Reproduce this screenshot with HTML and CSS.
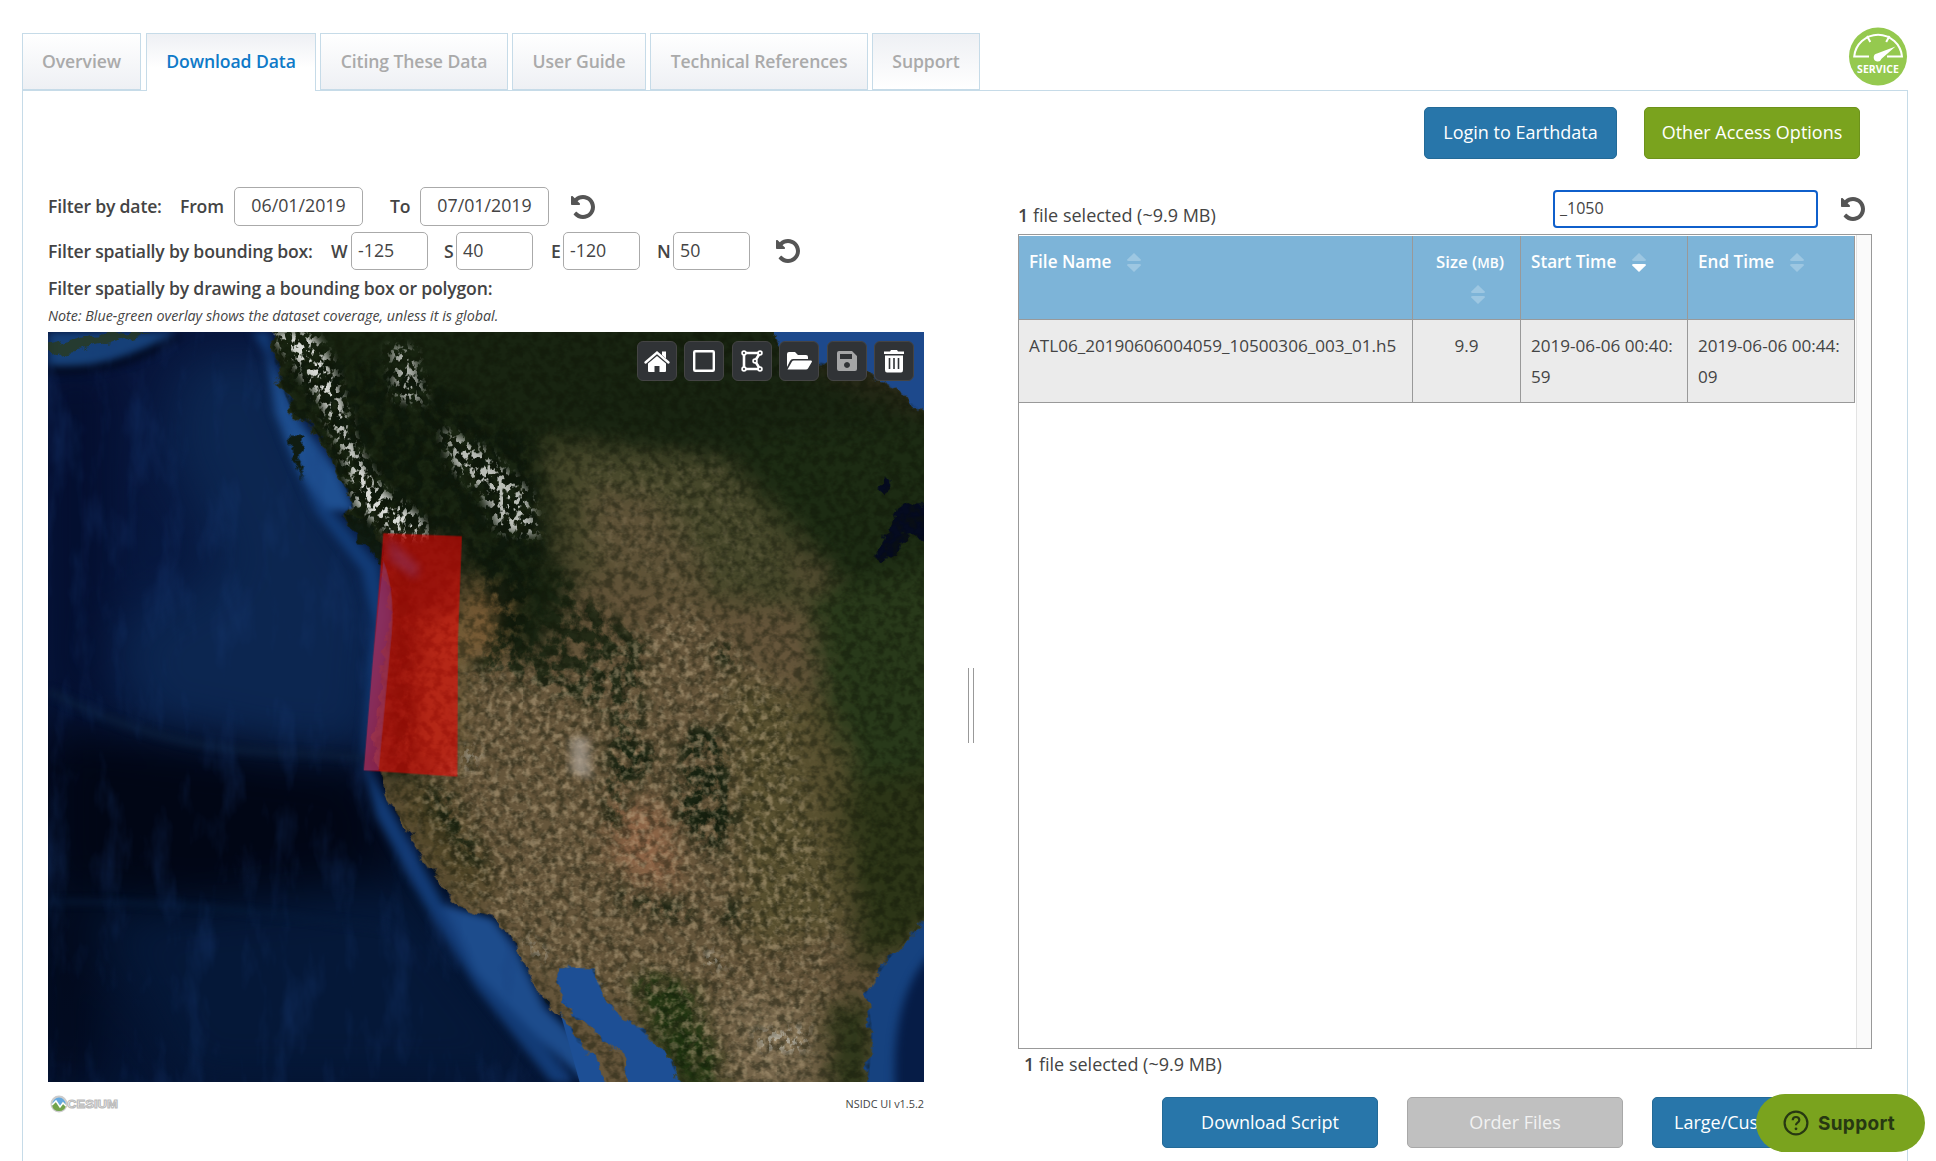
FILE: index.html
```html
<!DOCTYPE html>
<html lang="en">
<head>
<meta charset="utf-8">
<title>Download Data</title>
<link rel="stylesheet" href="styles.css">
</head>
<body>
<svg class="defs" width="0" height="0" aria-hidden="true">
  <symbol id="undo" viewBox="0 0 24 28"><path d="M24 14c0 6.6-5.4 12-12 12-3.600 0-7-1.600-9.250-4.350-.16-.2-.14-.5.03-.69l2.140-2.160c.1-.1.250-.140.39-.140.140.02.28.08.36.190A7.980 7.980 0 0 0 12 22c4.400 0 8-3.600 8-8s-3.600-8-8-8c-2.050 0-4 .8-5.440 2.170l2.140 2.160c.3.280.390.720.230 1.080-.16.370-.52.620-.92.620H1c-.55 0-1-.45-1-1V4c0-.4.250-.77.620-.92.370-.16.800-.08 1.100.22l2.030 2.010A12.060 12.060 0 0 1 12 2c6.600 0 12 5.400 12 12z"/></symbol>
  <symbol id="sort" viewBox="0 0 14 24" preserveAspectRatio="none"><path class="up" d="M7 0L14 8.500Q14 10 12.500 10H1.500Q0 10 0 8.500Z"/><path class="down" d="M7 24L14 15.500Q14 14 12.500 14H1.500Q0 14 0 15.500Z"/></symbol>
</svg>
<div class="page">
  <header class="top">
    <nav class="tabs">
      <a class="tab overview">Overview</a>
      <a class="tab active">Download Data</a>
      <a class="tab citing">Citing These Data</a>
      <a class="tab guide">User Guide</a>
      <a class="tab technical">Technical References</a>
      <a class="tab plain">Support</a>
    </nav>
    <svg class="service" viewBox="0 0 58 58">
      <circle cx="29" cy="29" r="29" fill="#95c94f"/>
      <g fill="none" stroke="#fff" stroke-width="2"><path d="M20 29H5.200A24 24 0 0 1 53 29H38M18 8.500l3.300 6M40.500 8.500l-3.300 6"/></g>
      <path d="M46.500 19L32.500 31.200A4 4 0 1 1 28 26Z" fill="#fff"/>
      <text x="29" y="45.500" text-anchor="middle" textLength="42">SERVICE</text>
    </svg>
  </header>
  <main class="panel">
    <section class="left">
      <div class="row dates">
        <b class="label">Filter by date:</b><b class="from">From</b><span class="field date">06/01/2019</span><b class="to">To</b><span class="field date">07/01/2019</span><svg class="undo"><use href="#undo"/></svg>
      </div>
      <div class="row box">
        <b class="label">Filter spatially by bounding box:</b><b class="w">W</b><span class="field">-125</span><b class="s">S</b><span class="field">40</span><b class="e">E</b><span class="field">-120</span><b class="n">N</b><span class="field">50</span><svg class="undo"><use href="#undo"/></svg>
      </div>
      <b class="draw">Filter spatially by drawing a bounding box or polygon:</b>
      <i class="note">Note: Blue-green overlay shows the dataset coverage, unless it is global.</i>
      <div class="map">
        <svg class="globe" viewBox="14 24 1526 1528" preserveAspectRatio="none">
          <defs>
            <linearGradient id="sea" x1="0" y1="0" x2="0" y2="1"><stop offset="0" stop-color="#07143a"/><stop offset=".45" stop-color="#071a42"/><stop offset=".58" stop-color="#030c26"/><stop offset=".75" stop-color="#031028"/><stop offset="1" stop-color="#041332"/></linearGradient>
            <filter id="b8" x="-30%" y="-30%" width="160%" height="160%" color-interpolation-filters="sRGB"><feGaussianBlur stdDeviation="8"/></filter>
            <filter id="b22" x="-50%" y="-50%" width="200%" height="200%" color-interpolation-filters="sRGB"><feGaussianBlur stdDeviation="24"/></filter>
            <filter id="b45" x="-80%" y="-80%" width="260%" height="260%" color-interpolation-filters="sRGB"><feGaussianBlur stdDeviation="45"/></filter>
            <filter id="coast" x="-5%" y="-5%" width="110%" height="110%" color-interpolation-filters="sRGB"><feTurbulence type="fractalNoise" baseFrequency=".035" numOctaves="3" seed="4"/><feDisplacementMap in="SourceGraphic" scale="32" xChannelSelector="R" yChannelSelector="G"/></filter>
            <filter id="grain" x="0" y="0" width="100%" height="100%" color-interpolation-filters="sRGB"><feTurbulence type="fractalNoise" baseFrequency=".07 .055" numOctaves="4" seed="7"/><feColorMatrix values="0 0 0 0 .06  0 0 0 0 .08  0 0 0 0 .03  3.600 0 0 0 -1.500"/><feComposite in2="SourceAlpha" operator="in"/></filter>
            <filter id="light" x="-10%" y="-10%" width="120%" height="120%" color-interpolation-filters="sRGB"><feGaussianBlur in="SourceAlpha" stdDeviation="20" result="m"/><feTurbulence type="fractalNoise" baseFrequency=".09 .07" numOctaves="4" seed="19"/><feColorMatrix values="0 0 0 0 .78  0 0 0 0 .7  0 0 0 0 .56  3.500 0 0 0 -1.600"/><feComposite in2="m" operator="in"/></filter>
            <filter id="wave" x="0" y="0" width="100%" height="100%" color-interpolation-filters="sRGB"><feTurbulence type="fractalNoise" baseFrequency=".02 .006" numOctaves="4" seed="3"/><feColorMatrix values="0 0 0 0 .1  0 0 0 0 .24  0 0 0 0 .48  2.400 0 0 0 -1.200"/></filter>
            <filter id="snow" x="-20%" y="-20%" width="140%" height="140%" color-interpolation-filters="sRGB"><feGaussianBlur in="SourceAlpha" stdDeviation="10" result="m"/><feTurbulence type="fractalNoise" baseFrequency=".1 .06" numOctaves="3" seed="11"/><feColorMatrix values="0 0 0 0 .85  0 0 0 0 .86  0 0 0 0 .84  9 0 0 0 -4.600"/><feComposite in2="m" operator="in"/></filter>
            <filter id="forest" x="-20%" y="-20%" width="140%" height="140%" color-interpolation-filters="sRGB"><feGaussianBlur in="SourceGraphic" stdDeviation="14" result="m"/><feTurbulence type="fractalNoise" baseFrequency=".045 .035" numOctaves="4" seed="31"/><feColorMatrix values="0 0 0 0 0  0 0 0 0 0  0 0 0 0 0  5 0 0 0 -1.900" result="n"/><feComposite in="m" in2="n" operator="in"/></filter>
            <clipPath id="landclip"><path d="M398 -20L410 90 425 145 440 190 475 215 500 265 520 315 545 370 525 400 560 440 590 480 600 530 612 580 605 650 595 720 590 800 582 860 592 920 605 975 640 1040 665 1090 695 1140 730 1195 790 1215 825 1265 850 1330 880 1390 920 1430 935 1470 970 1500 1005 1600H1030L1015 1500 985 1470 950 1430 920 1400 905 1370 900 1320H960L985 1385 1030 1430 1090 1490 1135 1600H1440L1450 1450 1440 1370 1480 1300 1540 1225 1620 1190V240L1540 190 1490 140 1430 100 1330 80 1290 60 1260 -20Z"/></clipPath>
          </defs>
          <rect x="14" y="24" width="1526" height="1528" fill="url(#sea)"/>
          <g filter="url(#b45)">
            <path d="M250 80L410 60 530 400 610 560 585 880 420 870 170 810 130 640 320 500 220 250Z" fill="#0c2650"/>
            <path d="M14 840L580 920 620 1120 300 1180 14 1170Z" fill="#010615"/>
            <path d="M14 90V800L110 790 110 110Z" fill="#030c2b"/>
            <path d="M100 1220L640 1150 900 1552H250Z" fill="#051838"/>
            <path d="M14 1200H80V1552H14Z" fill="#010514"/>
          </g>
          <g filter="url(#b8)">
            <path d="M14 24H240Q120 100 14 100Z" fill="#164078"/>
            <path d="M370 24H400L420 190 455 290 510 390 590 500 605 600 590 720 568 900 600 970 690 1160 760 1300 890 1490 930 1552H890L760 1360 670 1190 585 1010 560 890 580 620 560 510 480 390 425 240 400 80Z" fill="#123b76"/>
            <path d="M395 60L450 200 520 310 550 390 500 385 450 310 410 190Z" fill="#1e4f90"/>
            <path d="M700 1190L790 1220 830 1280 880 1400 950 1480 1000 1552H950L850 1440 760 1330Z" fill="#1d4c8c"/>
            <path d="M14 755Q200 870 400 880T560 895" fill="none" stroke="#0c203c" stroke-width="10"/>
            <path d="M14 1185Q250 1180 600 1240" fill="none" stroke="#061a38" stroke-width="8"/>
            <path d="M14 100Q140 110 240 30" fill="none" stroke="#020a20" stroke-width="16"/>
          </g>
          <rect x="14" y="24" width="1000" height="1528" filter="url(#wave)" opacity=".35"/>
          <path d="M880 1300H1000L1200 1552H940Z" fill="#1d4f95"/>
          <path d="M1240 24H1540V230H1460Z" fill="#1d498c"/>
          <path d="M1400 1210H1540V1552H1400Z" fill="#16427f"/>
          <path d="M1560 1280Q1480 1370 1490 1572H1560Z" fill="#061c46" filter="url(#b8)"/>
          <g filter="url(#coast)"><g clip-path="url(#landclip)">
            <rect x="14" y="-20" width="1620" height="1620" fill="#66563b"/>
            <g filter="url(#b22)">
              <path d="M360 -40H1620V700L1430 560 1290 400 1180 280 870 240 900 480 930 560 850 700 760 520 560 500 400 200Z" fill="#182411"/>
              <path d="M1210 240L1620 200V560H1400L1290 400Z" fill="#1c2b13"/>
              <path d="M870 240L1190 280 1310 420 1340 590 1100 560 940 530 900 430Z" fill="#46472a"/>
              <path d="M950 340L1080 360 1180 560 970 550Z" fill="#5e5237"/>
              <path d="M1620 480L1340 560 1370 800 1430 1000 1440 1250 1620 1200Z" fill="#28391a"/>
              <path d="M1200 720L1370 780 1430 960 1400 1240 1230 1280 1210 960Z" fill="#58502f"/>
              <path d="M1400 950L1620 900V1200L1430 1330Z" fill="#2c3517"/>
              <path d="M590 420L740 440 720 930 590 930Z" fill="#2b2c1b"/>
              <path d="M660 600L740 600 725 930 640 900Z" fill="#6b5a35"/>
              <path d="M730 530L830 560 800 690 730 680Z" fill="#7a5c36"/>
              <path d="M1020 970L1100 1000 1110 1170 1010 1120 990 1040Z" fill="#8f6547"/>
              <path d="M600 940L700 950 790 1130 770 1190 690 1130Z" fill="#4e4426"/>
              <path d="M1040 1330L1130 1360 1190 1600H1110Z" fill="#2a3917"/>
              <path d="M1180 1370L1330 1380 1370 1600H1220Z" fill="#75654a"/>
              <path d="M1380 1390H1450V1600H1380Z" fill="#293417"/>
              <path d="M1280 60H1620V230L1400 130Z" fill="#2b2a18"/>
            </g>
          </g>
          <path d="M1500 375L1580 370V450L1510 440 1490 480 1455 490 1475 430ZM1465 320l15 10-5 25-12-15Z" fill="#050b20"/>
          <path d="M435 235L465 235 450 290 462 330 440 280ZM525 390L560 400 600 460 595 495 550 435Z" fill="#101c12"/>
          <path d="M14 50L90 30 190 24 130 45 60 60 14 70Z" fill="#29391e" opacity=".8"/>
          </g>
          <g clip-path="url(#landclip)">
            <g filter="url(#forest)" fill="#182311">
              <path d="M830 540L900 490 950 560 1060 650 1050 820 1010 1050 980 1040 990 800 860 750 750 720Z" opacity=".85"/>
              <path d="M1120 820L1190 830 1220 1010 1180 1100 1100 1010Z"/>
              <path d="M980 1090L1020 1170 1140 1190 1130 1230 1010 1190Z"/>
              <path d="M660 940L720 970 780 1110 760 1120 690 1010Z"/>
              <path d="M1180 650L1220 670 1210 720 1170 690ZM1190 1180h30v60h-30Z"/>
              <path d="M1030 1330L1130 1350 1190 1552H1110Z" fill="#203511"/>
              <path d="M400 70L640 90 860 240 880 450 830 700 730 440 570 440 450 220Z" fill="#0c170b" opacity=".8"/>
              <path d="M1000 870L1090 860 1060 930 1000 960Z"/>
              <path d="M620 480H650V930H610Z"/>
            </g>
            <path d="M14 24H1540V1552H14Z" filter="url(#grain)" opacity=".42"/>
            <path d="M740 700L930 720 1120 570 1310 760 1330 950 1400 1250 1340 1552H1160L1020 1400 850 1300 740 1180 640 960 740 880Z" filter="url(#light)" opacity=".45"/>
            <path d="M940 280H1200L1300 520 1100 560 950 480Z" filter="url(#light)" opacity=".14"/>
            <g filter="url(#snow)">
              <path d="M400 24H470L500 70 530 170 540 230 570 300 600 350 660 400 680 440H620L550 380 530 280 490 170 440 80Z"/>
              <path d="M610 50L650 60 670 170 620 160Z" opacity=".8"/>
              <path d="M700 220L770 260 850 350 870 440 800 430 770 350 720 300Z" opacity=".85"/>
              <path d="M740 870L770 870 740 930ZM840 1240L890 1300 870 1310ZM1160 1270L1200 1320H1160ZM1240 1450L1340 1440 1330 1490 1260 1490Z" opacity=".5"/>
            </g>
            <path d="M925 850L955 850 960 935 925 920Z" fill="#b5aba0" opacity=".7" filter="url(#b8)"/>
          </g>
          <path d="M598 434L735 440 728 650 727 930 564 917 580 690Z" fill="#f00000" fill-opacity=".56"/>
          <path d="M598 490Q622 560 610 670L590 917H564L580 690Z" fill="#8050a0" opacity=".4"/>
          <path d="M605 440L660 500 655 530 610 490Z" fill="#8e3c70" opacity=".45" filter="url(#b8)"/>
        </svg>
        <div class="tools">
          <span><svg viewBox="0 0 26 22"><path d="M1.500 12.500L13 2.500l11.500 10" fill="none" stroke="#fff" stroke-width="2.400" stroke-linecap="round"/><path d="M18 1.500h4v7l-4-3.500zM13 6l9 7.500V21q0 1-1 1h-5.500v-6h-5v6H5q-1 0-1-1v-7.500z" fill="#fff"/></svg></span>
          <span><svg viewBox="0 0 26 22"><rect x="3.200" y="1.200" width="19.600" height="19.600" rx="1" fill="none" stroke="#fff" stroke-width="2.400"/></svg></span>
          <span><svg viewBox="0 0 26 22"><g fill="none" stroke="#fff" stroke-width="2.600"><path d="M5 3H21L16 11L21 19H5Z"/><g fill="#303336" stroke-width="1.700"><circle cx="5" cy="3" r="1.900"/><circle cx="21" cy="3" r="1.900"/><circle cx="16" cy="11" r="1.900"/><circle cx="21" cy="19" r="1.900"/><circle cx="5" cy="19" r="1.900"/></g></g></svg></span>
          <span><svg viewBox="0 0 26 22"><path d="M1 17V4q0-2 2-2h6l3 3h8q2 0 2 2v2H7q-2 0-3 2zM1.500 19.500L6 11.500q.6-1 2-1h17q1.500 0 .8 1.500L22 18.500q-.6 1-2 1z" fill="#fff"/></svg></span>
          <span><svg viewBox="0 0 26 22"><path fill-rule="evenodd" d="M5 1h13l5 5v13q0 2-2 2H5q-2 0-2-2V3q0-2 2-2zm1 3v5h12V4zm7 8a3 3 0 1 0 .01 0z" fill="#a5a6a7"/></svg></span>
          <span><svg viewBox="0 0 26 22"><path d="M3 1.500h6L10 0h6l1 1.500h6V4H3zM4 5.500h18V20q0 2.500-2 2.500H6q-2 0-2-2.500z" fill="#fff"/><path d="M8.500 8v11M13 8v11M17.500 8v11" stroke="#303336" stroke-width="1.600"/></svg></span>
        </div>
      </div>
      <div class="credits">
        <svg class="cesium" viewBox="0 0 70 20"><circle cx="9" cy="10" r="7.500" fill="#65a9df" stroke="#ccc" stroke-width="2"/><path d="M2 11l4-4 4 5 3-4 3 3Q15 17 9 17T2 11Z" fill="#73a34b"/><path d="M2 11l4-4 4 6 3-4 3 3" fill="none" stroke="#fff" stroke-width="1.500"/><text x="17" y="14" textLength="51" lengthAdjust="spacingAndGlyphs">CESIUM</text></svg>
        <span>NSIDC UI v1.5.2</span>
      </div>
    </section>
    <div class="splitter"><i></i></div>
    <section class="right">
      <div class="access"><a class="btn login">Login to Earthdata</a><a class="btn green">Other Access Options</a></div>
      <div class="search"><span class="count"><b>1</b> file selected (~9.9 MB)</span><span class="query">_1050</span><svg class="undo"><use href="#undo"/></svg></div>
      <div class="files">
        <div class="grid head"><span>File Name<svg class="sort"><use href="#sort"/></svg></span><span class="size">Size <em>(<small>MB</small>)</em><svg class="sort"><use href="#sort"/></svg></span><span>Start Time<svg class="sort desc"><use href="#sort"/></svg></span><span>End Time<svg class="sort"><use href="#sort"/></svg></span></div>
        <div class="grid body"><span>ATL06_20190606004059_10500306_003_01.h5</span><span class="num">9.9</span><span>2019-06-06 00:40:<br>59</span><span>2019-06-06 00:44:<br>09</span></div>
        <div class="track"></div>
      </div>
      <div class="count below"><b>1</b> file selected (~9.9 MB)</div>
      <div class="actions"><a class="btn">Download Script</a><a class="btn gray">Order Files</a><a class="btn large">Large/Cus</a></div>
    </section>
  </main>
</div>
<div class="support"><svg viewBox="0 0 26 26"><circle cx="13" cy="13" r="11.400" fill="none" stroke="#273812" stroke-width="2.200"/><path d="M9.700 10.300q.1-3.300 3.300-3.300t3.300 2.900q0 1.600-1.700 2.700T13 15.300" fill="none" stroke="#273812" stroke-width="2.200"/><circle cx="13" cy="18.800" r="1.400" fill="#273812"/></svg>Support</div>
</body>
</html>
```
FILE: styles.css
```css
* { box-sizing: border-box; }
body { margin: 0; width: 1936px; height: 1161px; overflow: hidden; background: #fff; color: #444; font: 18px/31px "Open Sans", "Noto Sans", sans-serif; }
b { font-weight: 600; }
.defs { position: absolute; }
.page { padding: 27px 28px 0 22px; }
.top { display: flex; justify-content: space-between; height: 63px; }
.tabs { display: flex; gap: 4px; padding-top: 6px; }
.tab { height: 57px; border: 1px solid #c6dbe8; background: linear-gradient(#fff, #eef0f4); text-align: center; font-size: 17.600px; line-height: 55px; font-weight: 600; letter-spacing: -.1px; color: #aaa; white-space: nowrap; }
.overview { width: 119px; margin-right: 1px; }
.citing { width: 188px; }
.guide { width: 134px; }
.technical { width: 218px; }
.tab.plain { width: 108px; background: linear-gradient(#eef0f4, #fff); }
.tab.active { z-index: 1; width: 170px; height: 58px; border-bottom: 0; background: linear-gradient(#eef0f4, #fff 60%); color: #0f7ac8; }
.service { width: 58px; height: 59px; margin-right: 1px; overflow: visible; }
.service text { font: 700 10.500px "Open Sans", sans-serif; fill: #fff; }
.panel { display: flex; width: 1886px; height: 1071px; border: 1px solid #c6dbe8; border-bottom: 0; padding-left: 25px; }
.left { flex: none; width: 876px; padding-top: 96px; }
.left b { font-size: 17.600px; letter-spacing: -.18px; }
.row { display: flex; align-items: center; white-space: nowrap; }
.dates { height: 39px; }
.dates .label { width: 132px; }
.box { height: 38px; margin-top: 6px; }
.box .label { width: 283px; }
.field { width: 77px; height: 38px; border: 1px solid #aaa; border-radius: 5px; padding-left: 6px; font-size: 17.800px; line-height: 35px; }
.field.date { width: 129px; height: 39px; padding: 0; text-align: center; }
.from { width: 54px; }
.to { width: 30px; margin-left: 27px; }
.w { width: 20px; }
.s { width: 12px; margin-left: 16px; }
.e { width: 12px; margin-left: 18px; }
.n { width: 16px; margin-left: 17px; }
.undo { width: 24px; height: 28px; fill: #555; flex: none; }
.dates .undo { margin-left: 22px; }
.box .undo { margin-left: 26px; }
.draw { display: block; height: 30px; margin-top: 3px; }
.note { display: block; height: 29px; font-size: 14.300px; line-height: 25px; }
.map { position: relative; height: 750px; overflow: hidden; background: #051330; }
.globe { display: block; width: 876px; height: 750px; }
.tools { position: absolute; top: 9px; right: 10px; display: flex; gap: 7.400px; }
.tools span { display: flex; align-items: center; justify-content: center; width: 40px; height: 40px; border: 1px solid #444; border-radius: 6px; background: #303336; }
.tools svg { width: 26px; height: 22px; overflow: visible; }
.credits { display: flex; justify-content: space-between; padding-top: 12px; font-size: 10.900px; line-height: 20px; }
.cesium { width: 70px; height: 20px; margin: 0 0 0 2px; }
.cesium text { font: 700 11px "Liberation Sans", sans-serif; fill: #fff; stroke: #bbb; stroke-width: 1px; }
.splitter { flex: none; width: 94px; padding: 577px 0 0 44px; }
.splitter i { display: block; width: 6px; height: 75px; border: solid #999; border-width: 0 1px; }
.right { flex: none; width: 854px; padding-top: 16px; }
.access { display: flex; justify-content: flex-end; gap: 27px; padding-right: 12px; }
.btn { width: 216px; height: 52px; border: 1px solid #236a97; border-radius: 5px; background: #2876aa; color: #fff; text-align: center; line-height: 49px; white-space: nowrap; }
.login { width: 193px; }
.btn.green { background: #7aa31e; border-color: #6d921b; }
.btn.gray { background: #c0c0c0; border-color: #a8a8a8; color: #f2f2f2; }
.search { display: flex; height: 75px; padding-top: 31px; }
.count { flex: 1; padding-top: 10px; }
.query { width: 265px; height: 38px; border: 2px solid #0f5fcb; border-radius: 4px; padding-left: 5px; font-size: 16px; line-height: 32px; }
.search .undo { margin: 5px 7px 0 23px; }
.files { position: relative; height: 815px; border: 1px solid #999; padding-top: 1px; }
.grid { display: grid; grid-template-columns: 393px 108px 167px 167px; width: 836px; border-right: 1px solid #999; font-size: 17.100px; line-height: 31px; }
.grid span { padding: 10px 0 0 10px; border-bottom: 1px solid #999; white-space: nowrap; }
.grid span + span { border-left: 1px solid #999; }
.head { height: 84px; background: #7db4d8; color: #fff; }
.head span { font-weight: 600; }
.body { height: 83px; background: #ebebeb; }
.sort { width: 14px; height: 19px; margin-left: 16px; vertical-align: -4px; fill: rgba(255,255,255,.25); }
.sort.desc { --d: #fff; }
#sort .down { fill: var(--d, rgba(255,255,255,.25)); }
.head .size { padding-left: 23px; font-size: 16.800px; }
.head em { font-style: normal; }
.head small { font-size: 13.600px; }
.size .sort { display: block; margin: 7px 0 0 35px; }
.body .num { padding-left: 0; text-align: center; }
.track { position: absolute; top: 0; right: 0; width: 15px; height: 813px; border-left: 1px solid #e3e3e3; background: #fafafa; }
.below { padding: 0 0 0 6px; }
.actions { display: flex; gap: 29px; margin: 17px 0 0 144px; }
.actions .btn { flex: none; height: 51px; }
.actions .large { padding-left: 21px; text-align: left; }
.support { position: absolute; left: 1756px; top: 1094px; display: flex; align-items: center; gap: 9px; width: 169px; height: 58px; border-radius: 29px; padding-left: 27px; background: #7aa31e; color: #273812; font: 700 19px Inter, "Liberation Sans", sans-serif; letter-spacing: .3px; }
.support svg { width: 26px; height: 26px; }
```
